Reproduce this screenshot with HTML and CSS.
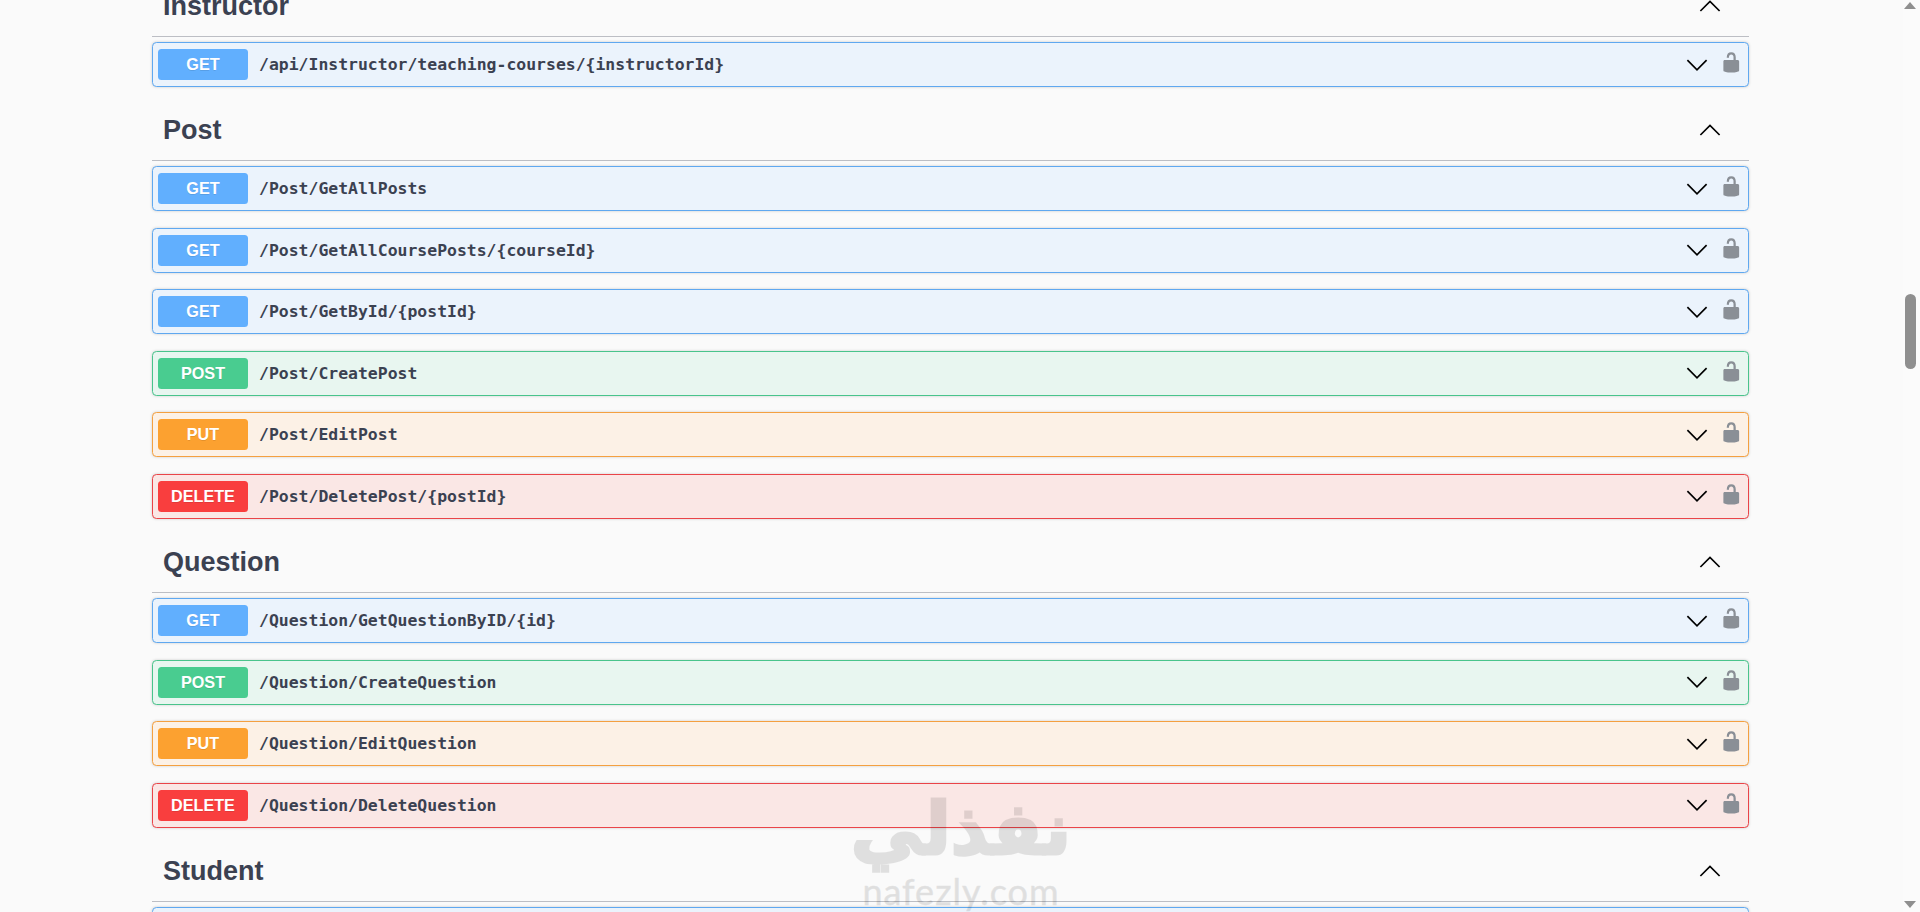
FILE: index.html
```html
<!DOCTYPE html>
<html lang="en">
<head>
<meta charset="utf-8">
<title>Swagger UI</title>
<link rel="stylesheet" href="styles.css">
</head>
<body>
<svg class="defs" width="0" height="0" aria-hidden="true">
  <symbol id="up" viewBox="0 0 20 20"><path d="M 2 15 L 10 7 L 18 15" fill="none" stroke="#000" stroke-width="1.4"/></symbol>
  <symbol id="down" viewBox="0 0 20 20"><path d="M 2 6 L 10 14 L 18 6" fill="none" stroke="#000" stroke-width="1.4"/></symbol>
  <symbol id="lock" viewBox="0 0 20 20"><path d="M15.8 8H14V5.6C14 2.703 12.665 1 10 1 7.334 1 6 2.703 6 5.6V6h2v-.801C8 3.754 8.797 3 10 3c1.203 0 2 .754 2 2.199V8H4c-.553 0-1 .646-1 1.199V17c0 .549.428 1.139.951 1.307l1.197.387C5.672 18.861 6.55 19 7.1 19h5.8c.549 0 1.428-.139 1.951-.307l1.196-.387c.524-.167.953-.757.953-1.306V9.199C17 8.646 16.352 8 15.8 8z" fill="#8a8f96"/></symbol>
</svg>
<main class="page">
  <section class="tag">
    <h3 class="tag-head"><span>Instructor</span><svg class="chev-up"><use href="#up"/></svg></h3>
    <div class="op get"><span class="method">GET</span><span class="path">/api/Instructor/teaching-courses/{instructorId}</span><svg class="chev"><use href="#down"/></svg><svg class="lock"><use href="#lock"/></svg></div>
  </section>
  <section class="tag">
    <h3 class="tag-head"><span>Post</span><svg class="chev-up"><use href="#up"/></svg></h3>
    <div class="op get"><span class="method">GET</span><span class="path">/Post/GetAllPosts</span><svg class="chev"><use href="#down"/></svg><svg class="lock"><use href="#lock"/></svg></div>
    <div class="op get"><span class="method">GET</span><span class="path">/Post/GetAllCoursePosts/{courseId}</span><svg class="chev"><use href="#down"/></svg><svg class="lock"><use href="#lock"/></svg></div>
    <div class="op get"><span class="method">GET</span><span class="path">/Post/GetById/{postId}</span><svg class="chev"><use href="#down"/></svg><svg class="lock"><use href="#lock"/></svg></div>
    <div class="op post"><span class="method">POST</span><span class="path">/Post/CreatePost</span><svg class="chev"><use href="#down"/></svg><svg class="lock"><use href="#lock"/></svg></div>
    <div class="op put"><span class="method">PUT</span><span class="path">/Post/EditPost</span><svg class="chev"><use href="#down"/></svg><svg class="lock"><use href="#lock"/></svg></div>
    <div class="op delete"><span class="method">DELETE</span><span class="path">/Post/DeletePost/{postId}</span><svg class="chev"><use href="#down"/></svg><svg class="lock"><use href="#lock"/></svg></div>
  </section>
  <section class="tag">
    <h3 class="tag-head"><span>Question</span><svg class="chev-up"><use href="#up"/></svg></h3>
    <div class="op get"><span class="method">GET</span><span class="path">/Question/GetQuestionByID/{id}</span><svg class="chev"><use href="#down"/></svg><svg class="lock"><use href="#lock"/></svg></div>
    <div class="op post"><span class="method">POST</span><span class="path">/Question/CreateQuestion</span><svg class="chev"><use href="#down"/></svg><svg class="lock"><use href="#lock"/></svg></div>
    <div class="op put"><span class="method">PUT</span><span class="path">/Question/EditQuestion</span><svg class="chev"><use href="#down"/></svg><svg class="lock"><use href="#lock"/></svg></div>
    <div class="op delete"><span class="method">DELETE</span><span class="path">/Question/DeleteQuestion</span><svg class="chev"><use href="#down"/></svg><svg class="lock"><use href="#lock"/></svg></div>
  </section>
  <section class="tag">
    <h3 class="tag-head"><span>Student</span><svg class="chev-up"><use href="#up"/></svg></h3>
    <div class="op get cut"></div>
  </section>
</main>
<div class="scrollbar">
  <span class="arrow-up"></span>
  <span class="thumb"></span>
  <span class="arrow-down"></span>
</div>
<div class="watermark">
  <div class="wm-ar" dir="rtl" lang="ar">نفذلي</div>
  <div class="wm-en">nafezly.com</div>
</div>
</body>
</html>
```
FILE: styles.css
```css
html, body { margin: 0; padding: 0; height: 912px; overflow: hidden; background: #fafafa; }
body { font-family: "Liberation Sans", Arial, sans-serif; color: #3b4151; }
.defs { position: absolute; }
.page { width: 1597px; margin: -20.9px 0 0 152px; }
.tag-head { display: flex; align-items: center; justify-content: space-between; height: 57.9px; margin: 0 0 5px; padding: 0 11px 2.5px; box-sizing: border-box; border-bottom: 1px solid #bcbec4; font-size: 27px; line-height: 1; font-weight: 700; color: #3b4151; }
.chev-up { width: 24px; height: 24px; margin: 0 16.5px 3px 0; }
.op { display: flex; align-items: center; box-sizing: border-box; height: 45px; margin-bottom: 16.5px; padding: 0 5px; border: 1px solid; border-radius: 4.5px; box-shadow: 0 0 3px rgba(0,0,0,.19); }
.method { width: 90px; height: 31px; display: flex; align-items: center; justify-content: center; border-radius: 3.5px; color: #fff; font-size: 16.2px; font-weight: 700; flex: none; text-shadow: 0 1px 0 rgba(0,0,0,.1); }
.path { flex: 1; margin-left: 11px; font-family: "DejaVu Sans Mono", monospace; font-size: 16.45px; font-weight: 600; color: #3b4151; white-space: nowrap; }
.chev { width: 24px; height: 24px; flex: none; margin-right: 10.5px; }
.lock { width: 22.5px; height: 22.5px; flex: none; margin: 0 1px 5px 0; }
.get { background: #ebf3fc; border-color: #5fa8f0; }
.get .method { background: #61affe; }
.post { background: #e8f6f0; border-color: #49c48c; }
.post .method { background: #49cc90; }
.put { background: #fcf1e6; border-color: #f4a040; }
.put .method { background: #fca130; }
.delete { background: #fae7e5; border-color: #ea4448; }
.delete .method { background: #f93e3e; }
.scrollbar { position: absolute; top: 0; right: 0; width: 17px; height: 912px; background: #fbfbfb; }
.thumb { position: absolute; left: 2px; top: 294px; width: 11px; height: 75px; border-radius: 6px; background: #8f8f8f; }
.arrow-up { position: absolute; left: 1px; top: 2px; border: 6.5px solid transparent; border-top: 0; border-bottom: 7px solid #8f8f8f; }
.arrow-down { position: absolute; left: 1px; bottom: 4px; border: 6.5px solid transparent; border-bottom: 0; border-top: 7px solid #8f8f8f; }
.watermark { position: absolute; left: 850px; top: 787px; width: 222px; text-align: center; pointer-events: none; color: #000; opacity: .1; }
.wm-ar { font-family: "DejaVu Sans", sans-serif; font-weight: 700; font-size: 72px; line-height: 84px; -webkit-text-stroke: 3px #000; }
.wm-en { font-family: "Lato", sans-serif; font-size: 36px; line-height: 40px; letter-spacing: 1px; -webkit-text-stroke: .5px #000; }
```
